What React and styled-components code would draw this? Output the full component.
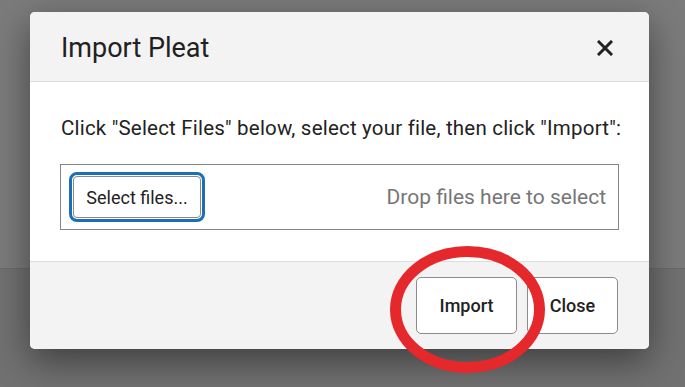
import React from "react";
import styled, { createGlobalStyle } from "styled-components";

const GlobalStyle = createGlobalStyle`
  html, body {
    margin: 0;
    padding: 0;
  }
  body {
    font-family: Roboto, "Liberation Sans", sans-serif;
    background: #7a7a7a;
  }
`;

const Page = styled.div`
  position: relative;
  width: 685px;
  height: 387px;
  overflow: hidden;
  display: flex;
  flex-direction: column;
`;

const PageTop = styled.div`
  height: 268px;
  background: #7b7b7b;
  border-bottom: 1px solid #6a6a6a;
`;

const PageBottom = styled.div`
  flex: 1;
  background: #717171;
`;

const Dialog = styled.div`
  position: absolute;
  left: 30px;
  top: 12px;
  width: 619px;
  border-radius: 5px;
  overflow: hidden;
  background: #fff;
  box-shadow: 0 12px 36px rgba(0, 0, 0, 0.45);
  display: flex;
  flex-direction: column;
`;

const Header = styled.div`
  height: 70px;
  box-sizing: border-box;
  padding: 2px 36px 0 31px;
  background: #f3f3f3;
  border-bottom: 1px solid #dcdcdc;
  display: flex;
  align-items: center;
  justify-content: space-between;
`;

const Title = styled.h2`
  margin: 0;
  font-size: 27px;
  font-weight: 400;
  color: #212121;
`;

const CloseX = styled.button`
  border: 0;
  background: none;
  padding: 0;
  width: 16px;
  height: 16px;
  display: flex;
  cursor: pointer;
`;

const Body = styled.div`
  padding: 34px 30px 31px 30px;
`;

const Intro = styled.p`
  margin: 0 0 24px 1px;
  font-size: 20.5px;
  letter-spacing: 0.2px;
  line-height: 24px;
  white-space: nowrap;
  color: #222;
`;

const DropZone = styled.div`
  height: 66px;
  box-sizing: border-box;
  border: 1px solid #858585;
  padding: 0 12px 0 12px;
  display: flex;
  align-items: center;
  justify-content: space-between;
`;

const SelectButton = styled.button`
  width: 128px;
  height: 42px;
  border: 1px solid #8a8a8a;
  border-radius: 4px;
  background: #fff;
  outline: 3px solid #1a6fb8;
  outline-offset: 1px;
  font-family: Roboto, "Liberation Sans", sans-serif;
  font-size: 18px;
  color: #222;
  cursor: pointer;
`;

const DropHint = styled.span`
  font-size: 21px;
  color: #767676;
`;

const Footer = styled.div`
  height: 88px;
  box-sizing: border-box;
  padding: 0 31px;
  background: #f3f3f3;
  border-top: 1px solid #dcdcdc;
  display: flex;
  align-items: center;
  justify-content: flex-end;
  gap: 10px;
`;

const FooterButton = styled.button`
  height: 57px;
  width: ${(p) => p.$w}px;
  border: 1px solid #8c8c8c;
  border-radius: 5px;
  background: #fff;
  font-family: Roboto, "Liberation Sans", sans-serif;
  font-size: 18px;
  font-weight: 500;
  color: #222;
  cursor: pointer;
`;

const Annotation = styled.svg`
  position: absolute;
  left: 0;
  top: 0;
  pointer-events: none;
`;

export default function App() {
  return (
    <>
      <GlobalStyle />
      <Page>
        <PageTop />
        <PageBottom />
        <Dialog>
          <Header>
            <Title>Import Pleat</Title>
            <CloseX aria-label="Close">
              <svg width="16" height="16" viewBox="0 0 16 16">
                <path
                  d="M2 2 L14 14 M14 2 L2 14"
                  stroke="#222"
                  strokeWidth="3"
                  strokeLinecap="square"
                />
              </svg>
            </CloseX>
          </Header>
          <Body>
            <Intro>
              Click "Select Files" below, select your file, then click "Import":
            </Intro>
            <DropZone>
              <SelectButton>Select files...</SelectButton>
              <DropHint>Drop files here to select</DropHint>
            </DropZone>
          </Body>
          <Footer>
            <FooterButton $w={101}>Import</FooterButton>
            <FooterButton $w={91}>Close</FooterButton>
          </Footer>
        </Dialog>
        <Annotation width="685" height="387">
          <ellipse
            cx="467.5"
            cy="309.5"
            rx="72"
            ry="58"
            fill="none"
            stroke="#e4282c"
            strokeWidth="11"
          />
        </Annotation>
      </Page>
    </>
  );
}
